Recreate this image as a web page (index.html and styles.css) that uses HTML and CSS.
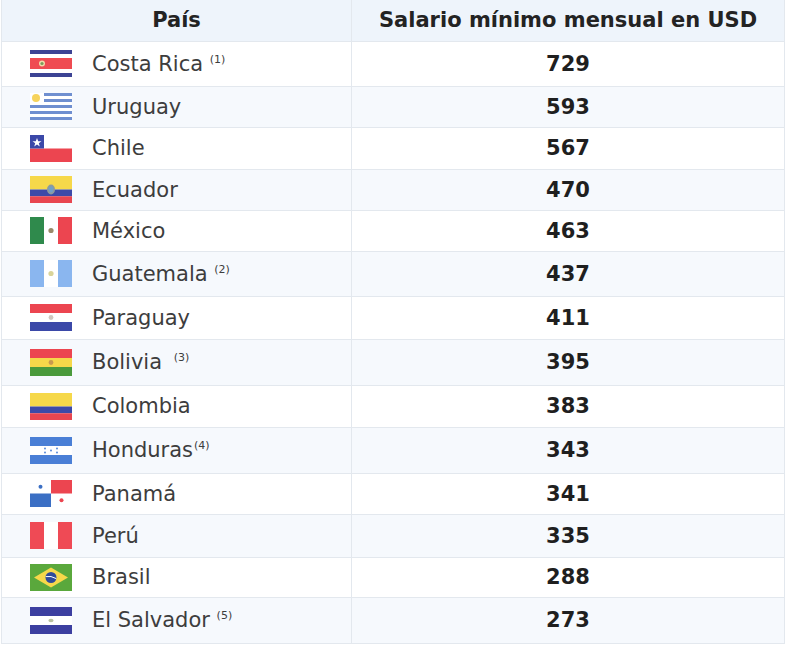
FILE: index.html
```html
<!DOCTYPE html>
<html lang="es">
<head>
<meta charset="utf-8">
<link rel="stylesheet" href="styles.css">
</head>
<body>
<table class="wage-table">
  <thead>
    <tr>
      <th class="col-country">País</th>
      <th class="col-wage">Salario mínimo mensual en USD</th>
    </tr>
  </thead>
  <tbody>
    <tr>
      <td class="country"><div class="cell">
        <svg class="flag" viewBox="0 0 42 27"><rect width="42" height="27" fill="#fff"/><rect y="0" width="42" height="4" fill="#3c4394"/><rect y="23" width="42" height="4" fill="#3c4394"/><rect y="8" width="42" height="11" fill="#ef4b52"/><circle cx="12" cy="13.5" r="3" fill="#f0d9a8"/><circle cx="12" cy="13.5" r="1.6" fill="#7a9c5c"/></svg>
        <span class="name">Costa Rica <sup>(1)</sup></span></div></td>
      <td class="wage">729</td>
    </tr>
    <tr>
      <td class="country"><div class="cell">
        <svg class="flag" viewBox="0 0 42 27"><rect width="42" height="27" fill="#fff"/><rect x="14" y="0" width="28" height="3" fill="#6f8fd0"/><rect x="14" y="6" width="28" height="3" fill="#6f8fd0"/><rect x="0" y="12" width="42" height="3" fill="#6f8fd0"/><rect x="0" y="18" width="42" height="3" fill="#6f8fd0"/><rect x="0" y="24" width="42" height="3" fill="#6f8fd0"/><circle cx="6" cy="5" r="4" fill="#f6d35c"/></svg>
        <span class="name">Uruguay</span></div></td>
      <td class="wage">593</td>
    </tr>
    <tr>
      <td class="country"><div class="cell">
        <svg class="flag" viewBox="0 0 42 27"><rect width="42" height="27" fill="#fff"/><rect y="13.5" width="42" height="13.5" fill="#ec4550"/><rect width="14" height="13.5" fill="#3b48a8"/><polygon points="7,3 8.2,6.3 11.5,6.3 8.8,8.3 9.8,11.5 7,9.5 4.2,11.5 5.2,8.3 2.5,6.3 5.8,6.3" fill="#fff"/></svg>
        <span class="name">Chile</span></div></td>
      <td class="wage">567</td>
    </tr>
    <tr>
      <td class="country"><div class="cell">
        <svg class="flag" viewBox="0 0 42 27"><rect width="42" height="13.5" fill="#f6d84a"/><rect y="13.5" width="42" height="6.75" fill="#3c4aa8"/><rect y="20.25" width="42" height="6.75" fill="#e84650"/><ellipse cx="21" cy="13.5" rx="4" ry="5" fill="#8a9aa0"/><ellipse cx="21" cy="13.5" rx="2.2" ry="3" fill="#6fa0c8"/></svg>
        <span class="name">Ecuador</span></div></td>
      <td class="wage">470</td>
    </tr>
    <tr>
      <td class="country"><div class="cell">
        <svg class="flag" viewBox="0 0 42 27"><rect width="42" height="27" fill="#fff"/><rect width="14" height="27" fill="#2f8a4c"/><rect x="28" width="14" height="27" fill="#ec4550"/><circle cx="21" cy="13.5" r="2.6" fill="#9a8a6a"/></svg>
        <span class="name">México</span></div></td>
      <td class="wage">463</td>
    </tr>
    <tr>
      <td class="country"><div class="cell">
        <svg class="flag" viewBox="0 0 42 27"><rect width="42" height="27" fill="#fff"/><rect width="14" height="27" fill="#8ab6ef"/><rect x="28" width="14" height="27" fill="#8ab6ef"/><circle cx="21" cy="13.5" r="2.6" fill="#d9d49a"/></svg>
        <span class="name">Guatemala <sup>(2)</sup></span></div></td>
      <td class="wage">437</td>
    </tr>
    <tr>
      <td class="country"><div class="cell">
        <svg class="flag" viewBox="0 0 42 27"><rect width="42" height="27" fill="#fff"/><rect width="42" height="9" fill="#ec4550"/><rect y="18" width="42" height="9" fill="#3b48a8"/><circle cx="21" cy="13.5" r="2.4" fill="#d0c8c0"/></svg>
        <span class="name">Paraguay</span></div></td>
      <td class="wage">411</td>
    </tr>
    <tr>
      <td class="country"><div class="cell">
        <svg class="flag" viewBox="0 0 42 27"><rect width="42" height="9" fill="#ec4550"/><rect y="9" width="42" height="9" fill="#f6d84a"/><rect y="18" width="42" height="9" fill="#4a9a3c"/><circle cx="21" cy="13.5" r="2.4" fill="#c89a50"/></svg>
        <span class="name">Bolivia <sup class="gap">(3)</sup></span></div></td>
      <td class="wage">395</td>
    </tr>
    <tr>
      <td class="country"><div class="cell">
        <svg class="flag" viewBox="0 0 42 27"><rect width="42" height="13.5" fill="#f6d84a"/><rect y="13.5" width="42" height="6.75" fill="#3c4aa8"/><rect y="20.25" width="42" height="6.75" fill="#e84650"/></svg>
        <span class="name">Colombia</span></div></td>
      <td class="wage">383</td>
    </tr>
    <tr>
      <td class="country"><div class="cell">
        <svg class="flag" viewBox="0 0 42 27"><rect width="42" height="27" fill="#fff"/><rect width="42" height="9" fill="#4a7fd6"/><rect y="18" width="42" height="9" fill="#4a7fd6"/><g fill="#4a7fd6"><circle cx="15" cy="11.5" r="0.9"/><circle cx="15" cy="15.5" r="0.9"/><circle cx="21" cy="13.5" r="0.9"/><circle cx="27" cy="11.5" r="0.9"/><circle cx="27" cy="15.5" r="0.9"/></g></svg>
        <span class="name">Honduras<sup class="tight">(4)</sup></span></div></td>
      <td class="wage">343</td>
    </tr>
    <tr>
      <td class="country"><div class="cell">
        <svg class="flag" viewBox="0 0 42 27"><rect width="42" height="27" fill="#fff"/><rect x="21" width="21" height="13.5" fill="#ec4550"/><rect y="13.5" width="21" height="13.5" fill="#3b6fc4"/><circle cx="10.5" cy="6.75" r="2" fill="#3b6fc4"/><circle cx="31.5" cy="20.25" r="2" fill="#ec4550"/></svg>
        <span class="name">Panamá</span></div></td>
      <td class="wage">341</td>
    </tr>
    <tr>
      <td class="country"><div class="cell">
        <svg class="flag" viewBox="0 0 42 27"><rect width="42" height="27" fill="#fff"/><rect width="14" height="27" fill="#ef4a55"/><rect x="28" width="14" height="27" fill="#ef4a55"/></svg>
        <span class="name">Perú</span></div></td>
      <td class="wage">335</td>
    </tr>
    <tr>
      <td class="country"><div class="cell">
        <svg class="flag" viewBox="0 0 42 27"><rect width="42" height="27" fill="#5aa83c"/><polygon points="21,3.5 38,13.5 21,23.5 4,13.5" fill="#f6d84a"/><circle cx="21" cy="13.5" r="5.5" fill="#2f4a9a"/><path d="M15.8 12.6 Q21 11.5 26.2 14.6" stroke="#fff" stroke-width="1" fill="none"/></svg>
        <span class="name">Brasil</span></div></td>
      <td class="wage">288</td>
    </tr>
    <tr>
      <td class="country"><div class="cell">
        <svg class="flag" viewBox="0 0 42 27"><rect width="42" height="27" fill="#fff"/><rect width="42" height="9" fill="#3c3fa0"/><rect y="18" width="42" height="9" fill="#3c3fa0"/><ellipse cx="21" cy="13.5" rx="2.6" ry="1.8" fill="#b8c0a0"/></svg>
        <span class="name">El Salvador <sup>(5)</sup></span></div></td>
      <td class="wage">273</td>
    </tr>
  </tbody>
</table>
</body>
</html>
```
FILE: styles.css
```css
* { box-sizing: border-box; }
html, body {
  margin: 0;
  padding: 0;
  background: #ffffff;
}
body {
  font-family: "DejaVu Sans", "Liberation Sans", sans-serif;
  color: #3a3a3a;
}
.wage-table {
  margin-left: 1px;
  width: 783px;
  border-collapse: collapse;
  table-layout: fixed;
}
.wage-table th,
.wage-table td {
  border: 1px solid #e3e8ee;
  padding: 0;
}
.wage-table thead th {
  background: #eef4fb;
  height: 41px;
  font-size: 21px;
  font-weight: 700;
  color: #232323;
  text-align: center;
  vertical-align: middle;
  border-top: none;
}
.col-country { width: 350px; }
.col-wage { width: 433px; }
.wage-table tbody tr { height: 43px; }
.wage-table tbody tr:nth-child(1) { height: 45px; }
.wage-table tbody tr:nth-child(2) { height: 41px; }
.wage-table tbody tr:nth-child(3) { height: 42px; }
.wage-table tbody tr:nth-child(4) { height: 41px; }
.wage-table tbody tr:nth-child(5) { height: 41px; }
.wage-table tbody tr:nth-child(6) { height: 45px; }
.wage-table tbody tr:nth-child(7) { height: 43px; }
.wage-table tbody tr:nth-child(8) { height: 46px; }
.wage-table tbody tr:nth-child(9) { height: 42px; }
.wage-table tbody tr:nth-child(10) { height: 46px; }
.wage-table tbody tr:nth-child(11) { height: 41px; }
.wage-table tbody tr:nth-child(12) { height: 43px; }
.wage-table tbody tr:nth-child(13) { height: 40px; }
.wage-table tbody tr:nth-child(14) { height: 46px; }
.wage-table tbody tr:nth-child(even) td { background: #f6f9fd; }
.cell {
  display: flex;
  align-items: center;
  gap: 20px;
  padding-left: 28px;
}
.flag {
  width: 42px;
  height: 27px;
  display: block;
  flex: none;
}
.name {
  font-size: 21px;
  color: #3d3d3d;
  white-space: nowrap;
}
.name sup {
  font-size: 11px;
  vertical-align: 8px;
  margin-left: 0;
}
.name sup.gap { margin-left: 5px; }
.name sup.tight { margin-left: 1px; }
.wage {
  text-align: center;
  font-size: 21px;
  font-weight: 700;
  color: #1f1f1f;
}
```
